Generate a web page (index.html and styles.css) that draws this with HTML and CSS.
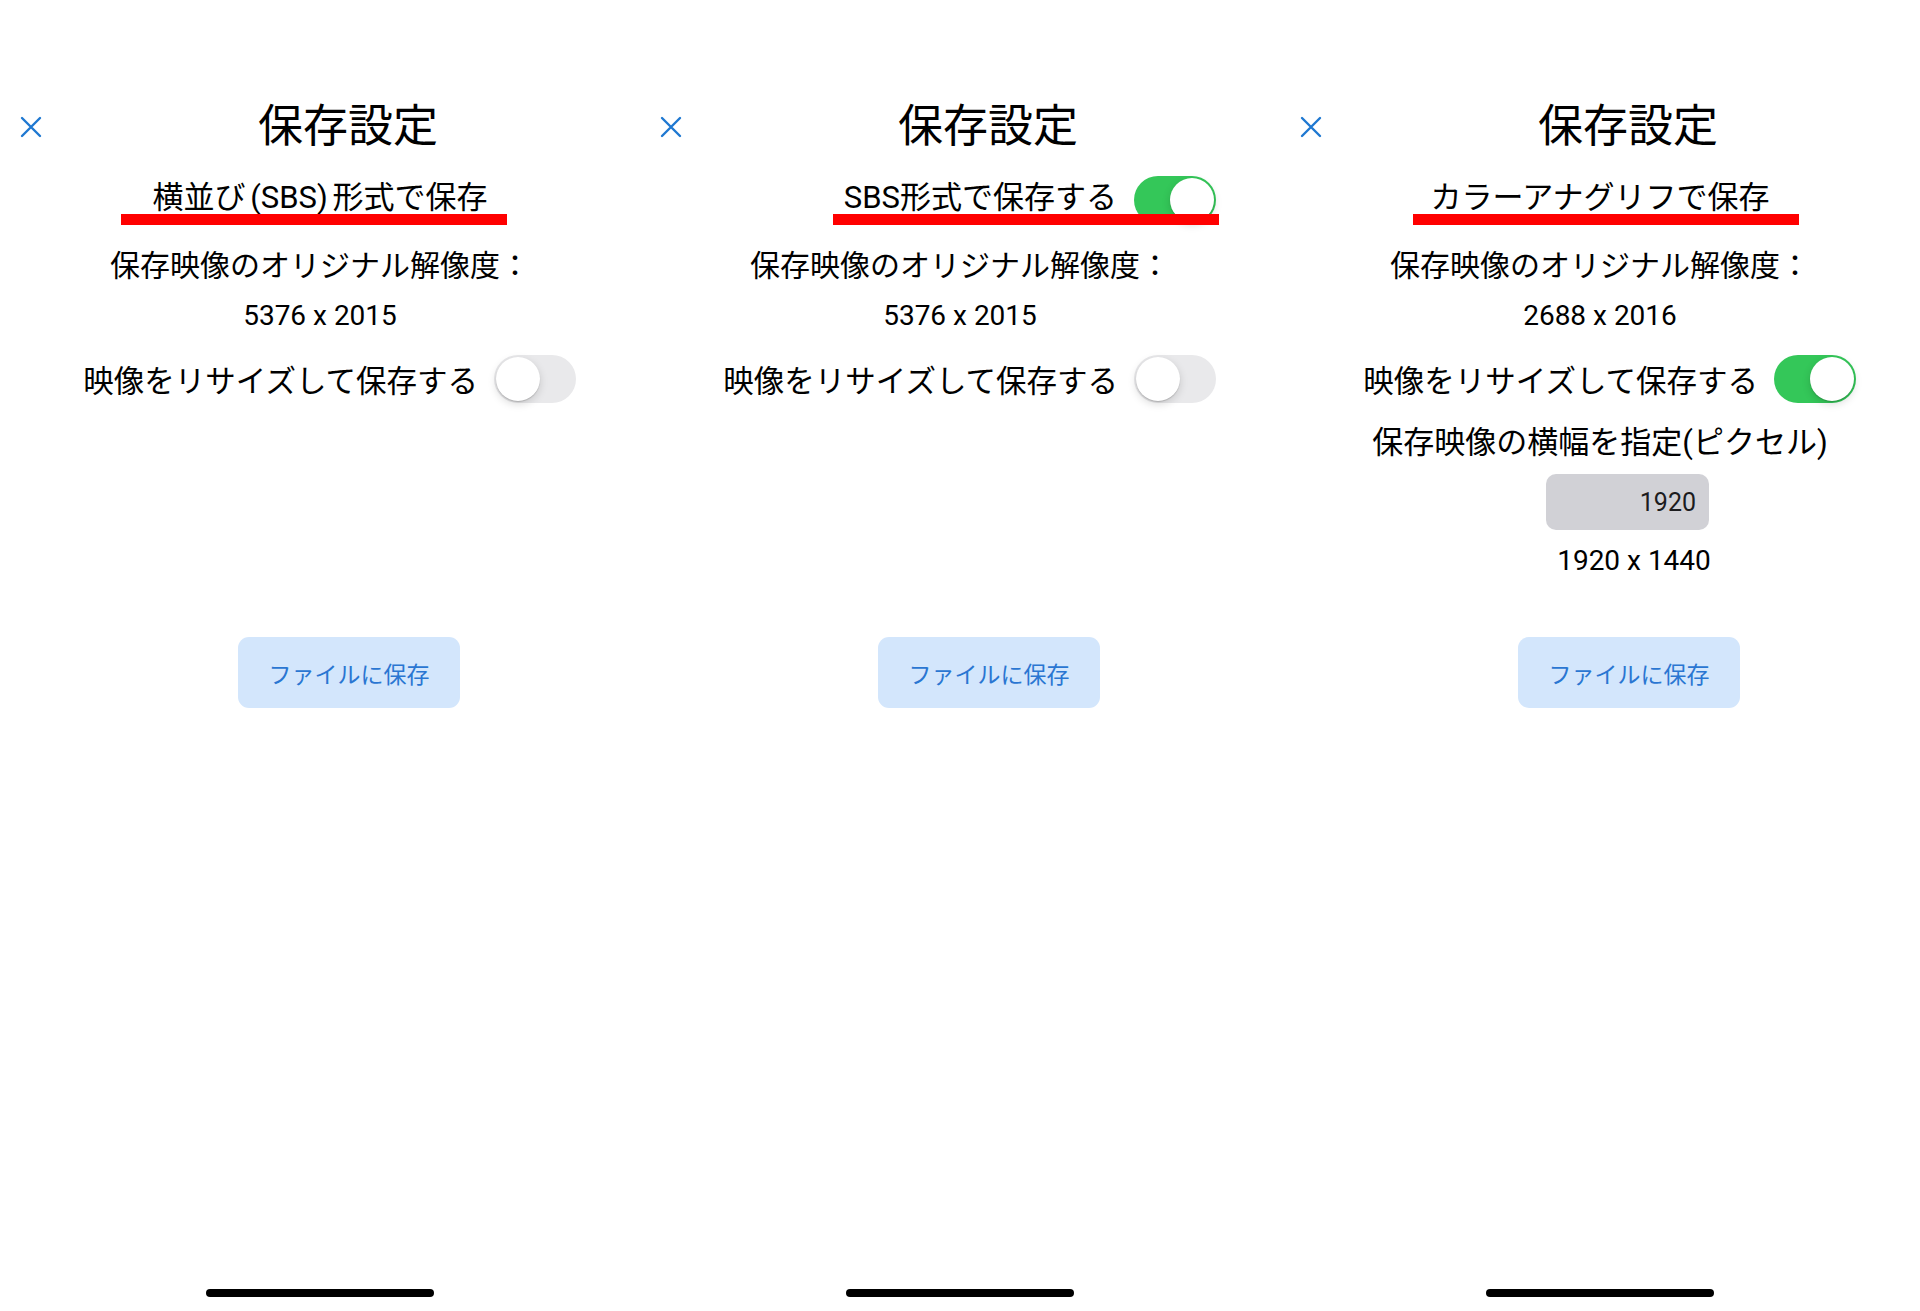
FILE: index.html
```html
<!DOCTYPE html>
<html lang="ja">
<head>
  <meta charset="UTF-8">
  <meta name="viewport" content="width=device-width, initial-scale=1.0">
  <title>保存設定</title>
  <link rel="stylesheet" href="styles.css">
</head>
<body>
  <div class="screens">

    <!-- 横並び (SBS) -->
    <section class="sheet">
      <div class="nav">
        <svg class="close" width="22" height="22" viewBox="0 0 22 22"><path d="M2 2 L20 20 M20 2 L2 20"/></svg>
        <h1 class="title">保存設定</h1>
      </div>
      <div class="form">
        <div class="heading">
          <span class="heading-text heading-tight">横並び (SBS) 形式で保存</span>
          <span class="mark mark-first"></span>
        </div>
        <p class="label">保存映像のオリジナル解像度：</p>
        <p class="size">5376 x 2015</p>
        <div class="switch-row">
          <span class="switch-label">映像をリサイズして保存する</span>
          <span class="switch"></span>
        </div>
      </div>
      <button class="save-button">ファイルに保存</button>
      <div class="home-bar"></div>
    </section>

    <!-- SBS形式 トグル -->
    <section class="sheet">
      <div class="nav">
        <svg class="close" width="22" height="22" viewBox="0 0 22 22"><path d="M2 2 L20 20 M20 2 L2 20"/></svg>
        <h1 class="title">保存設定</h1>
      </div>
      <div class="form">
        <div class="heading heading-switch">
          <span class="heading-text">SBS形式で保存する</span>
          <span class="switch switch-on"></span>
          <span class="mark mark-second"></span>
        </div>
        <p class="label">保存映像のオリジナル解像度：</p>
        <p class="size">5376 x 2015</p>
        <div class="switch-row">
          <span class="switch-label">映像をリサイズして保存する</span>
          <span class="switch"></span>
        </div>
      </div>
      <button class="save-button">ファイルに保存</button>
      <div class="home-bar"></div>
    </section>

    <!-- カラーアナグリフ -->
    <section class="sheet">
      <div class="nav">
        <svg class="close" width="22" height="22" viewBox="0 0 22 22"><path d="M2 2 L20 20 M20 2 L2 20"/></svg>
        <h1 class="title">保存設定</h1>
      </div>
      <div class="form">
        <div class="heading">
          <span class="heading-text">カラーアナグリフで保存</span>
          <span class="mark mark-third"></span>
        </div>
        <p class="label">保存映像のオリジナル解像度：</p>
        <p class="size">2688 x 2016</p>
        <div class="switch-row">
          <span class="switch-label">映像をリサイズして保存する</span>
          <span class="switch switch-on"></span>
        </div>
        <p class="label label-width">保存映像の横幅を指定(ピクセル)</p>
        <input class="width-input" type="text" value="1920" readonly>
        <p class="size size-result">1920 x 1440</p>
      </div>
      <button class="save-button">ファイルに保存</button>
      <div class="home-bar"></div>
    </section>

  </div>
</body>
</html>
```

FILE: styles.css
```css
body {
  margin: 0;
  background-color: #fff;
  color: #000;
  font-family: Roboto, "Noto Sans CJK JP", sans-serif;
}

p,
h1 {
  margin: 0;
}

.screens {
  display: flex;
}

.sheet {
  width: 640px;
  height: 1311px;
  display: flex;
  flex-direction: column;
  align-items: center;
  flex-shrink: 0;
}

/* ナビゲーション */
.nav {
  align-self: stretch;
  display: flex;
  align-items: center;
  height: 54px;
  margin-top: 100px;
  padding-left: 20px;
}

.close {
  flex-shrink: 0;
  fill: none;
  stroke: #1f78d1;
  stroke-width: 2.4;
  stroke-linecap: round;
}

.title {
  flex: 1;
  padding-left: 14px;
  text-align: center;
  font-size: 45px;
  font-weight: 400;
  line-height: 54px;
}

/* 設定エリア */
.form {
  display: flex;
  flex-direction: column;
  align-items: center;
  align-self: stretch;
  height: 425px;
  box-sizing: border-box;
  padding-top: 22px;
  flex-shrink: 0;
}

.heading {
  position: relative;
  align-self: stretch;
  display: flex;
  align-items: center;
  justify-content: center;
  height: 48px;
  font-size: 31px;
}

.heading-text {
  line-height: 40px;
  margin-bottom: 5px;
}

.heading-tight {
  word-spacing: -3px;
}

.heading-switch {
  justify-content: flex-end;
  gap: 17px;
  padding-right: 64px;
}

/* 赤い下線 */
.mark {
  position: absolute;
  top: 38px;
  height: 11px;
  width: 386px;
  background-color: #f00;
}

.mark-first {
  left: 121px;
}

.mark-second {
  left: 193px;
}

.mark-third {
  left: 133px;
}

.label {
  margin-top: 22px;
  font-size: 30px;
  line-height: 40px;
}

.label-width {
  margin-top: 20px;
  font-size: 31px;
}

.size {
  margin-top: 12px;
  font-size: 28px;
  line-height: 36px;
}

.size-result {
  margin-top: 13px;
  margin-left: 68px;
}

.switch-row {
  align-self: flex-end;
  display: flex;
  align-items: center;
  gap: 16px;
  height: 48px;
  margin-top: 21px;
  margin-right: 64px;
}

.switch-label {
  font-size: 30.5px;
}

.switch {
  position: relative;
  flex-shrink: 0;
  width: 82px;
  height: 48px;
  border-radius: 24px;
  background-color: #e9e9eb;
}

.switch::after {
  content: "";
  position: absolute;
  top: 2px;
  left: 2px;
  width: 44px;
  height: 44px;
  border-radius: 50%;
  background-color: #fff;
  box-shadow: 0 3px 8px rgba(0, 0, 0, 0.15), 0 1px 1px rgba(0, 0, 0, 0.16);
}

.switch-on {
  background-color: #34c759;
}

.switch-on::after {
  left: 36px;
}

.width-input {
  width: 163px;
  height: 56px;
  margin-top: 11px;
  margin-left: 55px;
  padding: 0 13px 0 0;
  box-sizing: border-box;
  border: none;
  border-radius: 10px;
  background-color: #d1d1d6;
  color: #1c1c1e;
  font-family: Roboto, sans-serif;
  font-size: 25px;
  text-align: right;
  outline: none;
}

/* 保存ボタン */
.save-button {
  width: 222px;
  height: 71px;
  margin-top: 58px;
  margin-left: 58px;
  border: none;
  border-radius: 11px;
  background-color: #d3e6fc;
  color: #2a76d2;
  font-family: "Noto Sans CJK JP", sans-serif;
  font-size: 23px;
  cursor: pointer;
}

.home-bar {
  width: 228px;
  height: 8px;
  margin-top: auto;
  margin-bottom: 14px;
  border-radius: 4px;
  background-color: #000;
}
```
